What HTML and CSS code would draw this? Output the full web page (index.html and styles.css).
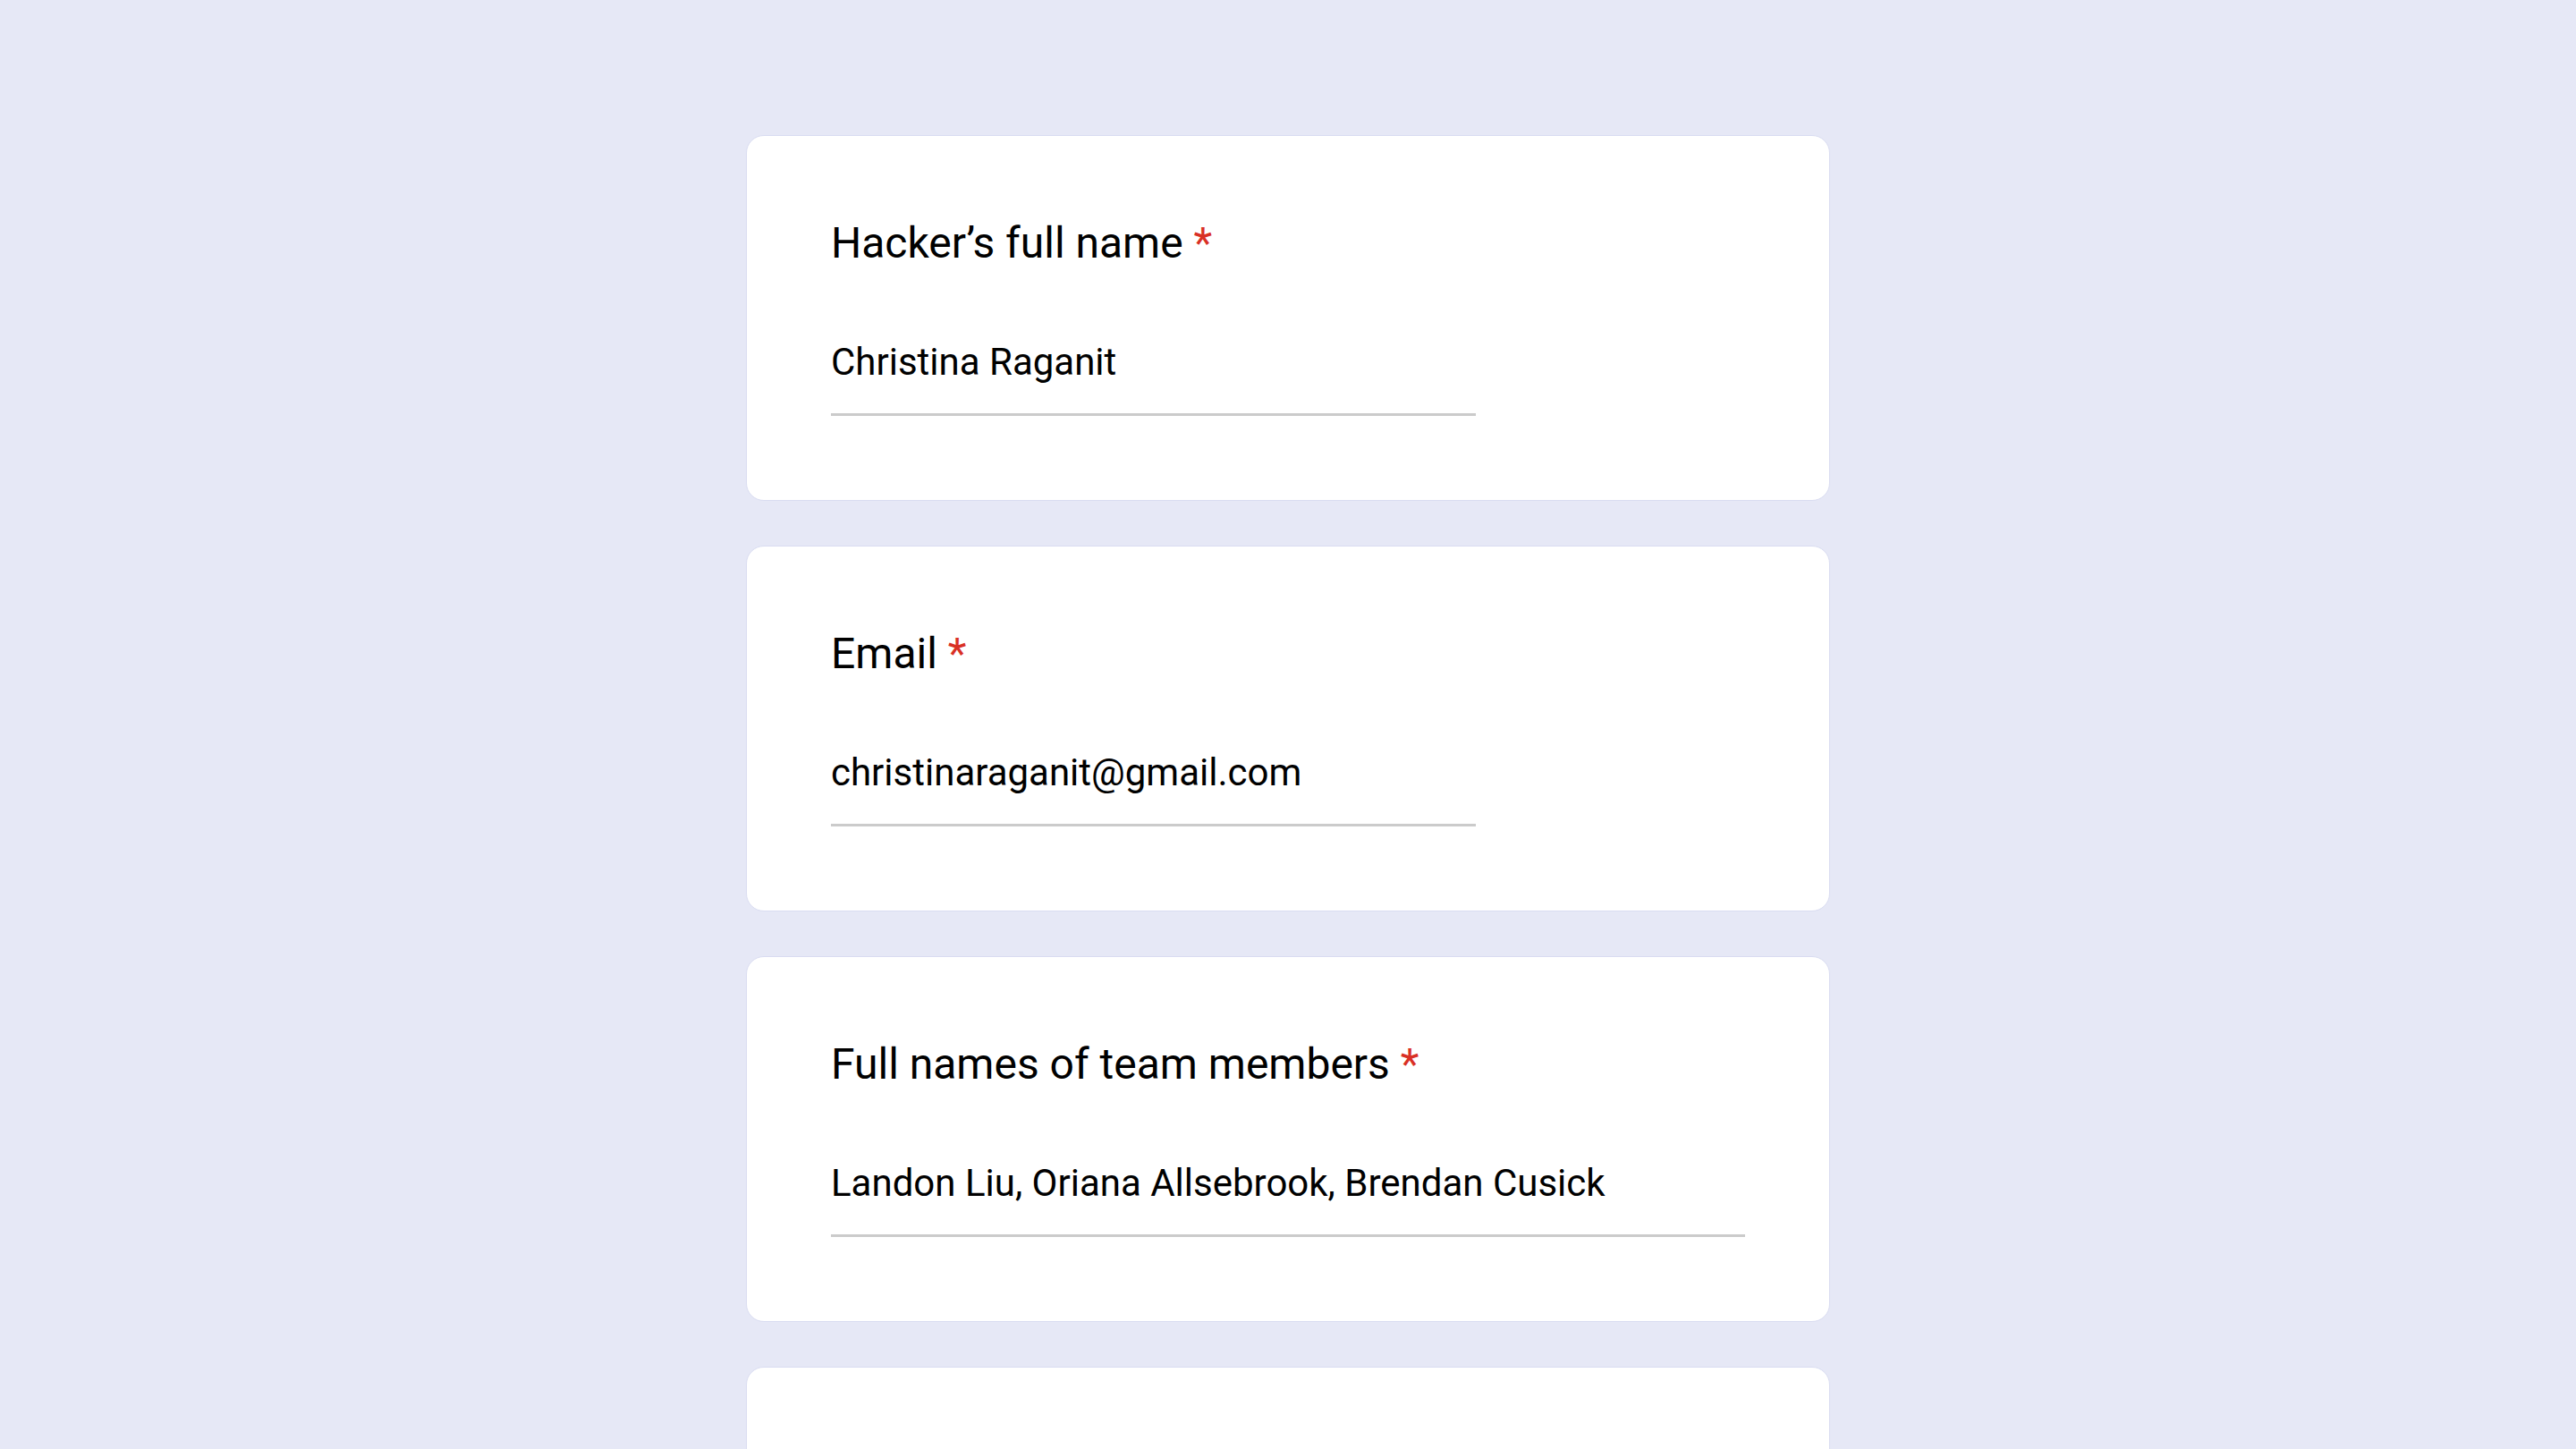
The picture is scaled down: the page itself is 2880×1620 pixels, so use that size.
FILE: index.html
```html
<!DOCTYPE html>
<html lang="en">
<head>
<meta charset="utf-8">
<title>Hackathon registration</title>
<link rel="stylesheet" href="styles.css">
</head>
<body>
<main class="form">
  <section class="card">
    <h2 class="question">Hacker’s full name <span class="req">*</span></h2>
    <div class="answer short">Christina Raganit</div>
  </section>
  <section class="card">
    <h2 class="question">Email <span class="req">*</span></h2>
    <div class="answer short">christinaraganit@gmail.com</div>
  </section>
  <section class="card">
    <h2 class="question">Full names of team members <span class="req">*</span></h2>
    <div class="answer long">Landon Liu, Oriana Allsebrook, Brendan Cusick</div>
  </section>
  <section class="card">
    <h2 class="question">&nbsp;</h2>
    <div class="answer short">&nbsp;</div>
  </section>
</main>
</body>
</html>
```

FILE: styles.css
```css
* {
  box-sizing: border-box;
}

html, body {
  margin: 0;
  padding: 0;
}

body {
  background: #e6e8f6;
  font-family: Roboto, "Liberation Sans", Arial, sans-serif;
  color: #000;
  overflow: hidden;
  height: 1620px;
}

.form {
  width: 1212px;
  margin: 0 auto;
  padding-top: 151px;
  display: flex;
  flex-direction: column;
  gap: 50px;
}

.card {
  background: #ffffff;
  border: 1px solid #d9dcf1;
  border-radius: 20px;
  padding: 92px 94px 94px 94px;
  height: 409px;
  flex-shrink: 0;
}

.question {
  margin: 0;
  font-size: 48px;
  font-weight: 400;
  line-height: 56px;
}

.req {
  color: #d93025;
}

.answer {
  margin-top: 81px;
  font-size: 42px;
  line-height: 48px;
  padding-bottom: 33px;
  border-bottom: 3px solid #cbcbcb;
}

.answer.short {
  width: 721px;
}

.answer.long {
  width: 100%;
}
```
